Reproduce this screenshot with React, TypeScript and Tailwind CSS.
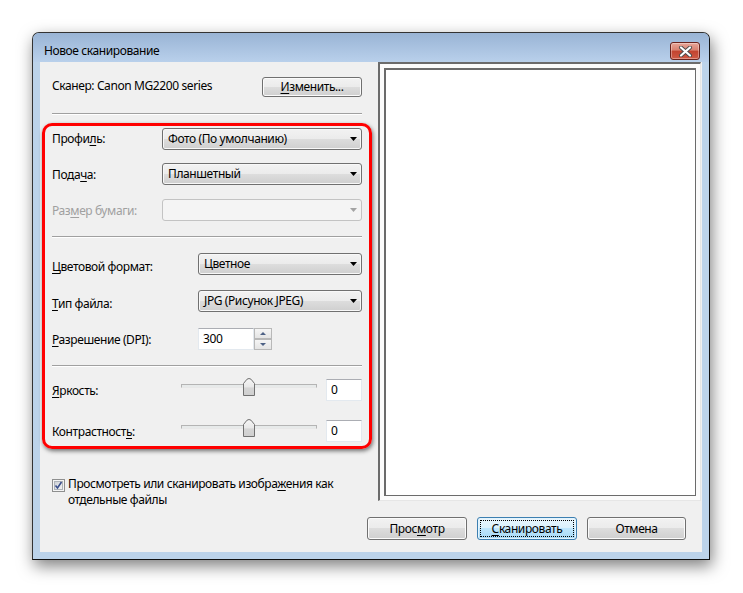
import type { ReactNode } from "react";

const btn =
  "flex items-center justify-center rounded-[3px] border border-[#707070] bg-[linear-gradient(to_bottom,#f2f2f2_0%,#ebebeb_50%,#dddddd_50%,#cfcfcf_100%)] shadow-[inset_0_0_0_1px_#fbfbfb] text-black";

function U({ children }: { children: ReactNode }) {
  return <span className="underline underline-offset-2">{children}</span>;
}

function Arrow({ disabled }: { disabled?: boolean }) {
  return (
    <svg width="7" height="4" viewBox="0 0 7 4" className="shrink-0">
      <path d="M0 0h7L3.5 4z" fill={disabled ? "#a3a3a3" : "#000"} />
    </svg>
  );
}

function Combo({ value, width, disabled }: { value?: string; width: string; disabled?: boolean }) {
  return (
    <div
      className={
        disabled
          ? `${width} flex h-[22px] items-center justify-between rounded-[3px] border border-[#c3c3c3] bg-[#f4f4f4] pl-[5px] pr-[4px]`
          : `${width} flex h-[22px] items-center justify-between rounded-[3px] border border-[#707070] bg-[linear-gradient(to_bottom,#f2f2f2_0%,#ebebeb_50%,#dddddd_50%,#cfcfcf_100%)] pl-[5px] pr-[4px] shadow-[inset_0_0_0_1px_#f8f8f8]`
      }
    >
      <span className="leading-none">{value}</span>
      <Arrow disabled={disabled} />
    </div>
  );
}

function Edit({ value, width }: { value: string; width: string }) {
  return (
    <div
      className={`${width} flex h-[22px] items-center border border-[#e3e9ef] border-t-[#abadb3] bg-white pl-[4px]`}
    >
      {value}
    </div>
  );
}

function Slider() {
  return (
    <div className="relative h-[22px] w-[136px]">
      <div className="absolute left-0 right-0 top-[5px] h-[4px] border border-[#b4b4b4] border-b-[#e8e8e8] bg-[#e7eaea]" />
      <svg
        width="12"
        height="18"
        viewBox="0 0 12 18"
        className="absolute left-[62px] top-[-1px]"
      >
        <defs>
          <linearGradient id="thumb" x1="0" y1="0" x2="0" y2="1">
            <stop offset="0" stopColor="#f6f6f6" />
            <stop offset="0.5" stopColor="#e8e8e8" />
            <stop offset="0.55" stopColor="#d5d5d5" />
            <stop offset="1" stopColor="#cfcfcf" />
          </linearGradient>
        </defs>
        <path
          d="M0.5 17.5V5.5L4 1.2Q6 -0.2 8 1.2L11.5 5.5V17.5Z"
          fill="url(#thumb)"
          stroke="#707070"
        />
      </svg>
    </div>
  );
}

function Spin() {
  return (
    <div className="flex">
      <Edit value="300" width="w-[56px]" />
      <div className="flex w-[18px] flex-col">
        {["M1 4h6L4 1z", "M1 1h6L4 4z"].map((d) => (
          <div
            key={d}
            className="flex h-[11px] items-center justify-center border border-[#b8b8b8] bg-[linear-gradient(to_bottom,#f5f5f5,#e4e4e4)]"
          >
            <svg width="8" height="5" viewBox="0 0 8 5">
              <path d={d} fill="#4d6185" />
            </svg>
          </div>
        ))}
      </div>
    </div>
  );
}

function Sep() {
  return <div className="h-[2px] border-t border-[#a0a0a0] border-b border-b-white" />;
}

export default function App() {
  return (
    <div
      className="h-[593px] w-[743px] overflow-hidden bg-white pl-[32px] pt-[32px] text-[12px] tracking-[-0.4px] text-black"
      style={{ fontFamily: '"Noto Sans", "Segoe UI", sans-serif' }}
    >
      <div className="flex h-[528px] w-[678px] flex-col rounded-t-[7px] border border-[#333] border-b-[#111] border-r-[#111] bg-[#bcd3ea] shadow-[2px_6px_16px_rgba(0,0,0,0.5)]">
        {/* title bar */}
        <div className="flex h-[29px] items-start justify-between rounded-t-[6px] bg-[linear-gradient(to_bottom,#99b4d5,#b9d0eb)] pl-[11px] pr-[9px]">
          <span className="mt-[12px] leading-none">Новое сканирование</span>
          <div className="mt-[9px] flex h-[18px] w-[30px] items-center justify-center rounded-[3px] border border-[#6a231d] bg-[linear-gradient(to_bottom,#e8a699_0%,#d8806f_45%,#c2432f_50%,#cf5a45_100%)] shadow-[inset_0_0_0_1px_rgba(255,255,255,0.35)]">
            <svg width="15" height="11" viewBox="0 0 15 11">
              <path
                d="M3 1.5l9 8M12 1.5l-9 8"
                stroke="#4b4b4b"
                strokeWidth="4"
                strokeLinecap="round"
              />
              <path
                d="M3 1.5l9 8M12 1.5l-9 8"
                stroke="#fff"
                strokeWidth="2.2"
                strokeLinecap="round"
              />
            </svg>
          </div>
        </div>

        {/* client */}
        <div className="flex flex-1 px-[7px] pb-[7px]">
          <div className="flex flex-1 flex-col bg-[#f0f0f0]">
            <div className="flex h-[439px]">
              {/* left side */}
              <div className="flex w-[338px] flex-col pl-[12px] pr-[16px]">
                <div className="mt-[15px] flex h-[20px] items-center justify-between">
                  <span className="-mt-[3px]">Сканер: Canon MG2200 series</span>
                  <div className={`${btn} h-[20px] w-[100px]`}>
                    <span>
                      <U>И</U>зменить...
                    </span>
                  </div>
                </div>
                <div className="mt-[16px]">
                  <Sep />
                </div>

                <div className="-mx-[10px] mt-[8px] rounded-[10px] border-[3px] border-[#ff0000] px-[7px] pb-[4px] pt-[2px] shadow-[1px_2px_4px_rgba(0,0,0,0.55)]">
                  <div className="flex items-start">
                    <span className="mt-[2px] w-[110px]">
                      Профи<U>л</U>ь:
                    </span>
                    <Combo value="Фото (По умолчанию)" width="w-[200px]" />
                  </div>
                  <div className="mt-[13px] flex items-start">
                    <span className="mt-[3px] w-[110px]">
                      Пода<U>ч</U>а:
                    </span>
                    <Combo value="Планшетный" width="w-[200px]" />
                  </div>
                  <div className="mt-[14px] flex items-start">
                    <span className="mt-[3px] w-[110px] text-[#a0a0a0]">
                      Раз<U>м</U>ер бумаги:
                    </span>
                    <Combo width="w-[200px]" disabled />
                  </div>

                  <div className="mt-[15px]">
                    <Sep />
                  </div>

                  <div className="mt-[15px] flex items-start">
                    <span className="mt-[5px] w-[146px]">
                      <U>Ц</U>ветовой формат:
                    </span>
                    <Combo value="Цветное" width="w-[164px]" />
                  </div>
                  <div className="mt-[14px] flex items-start">
                    <span className="mt-[5px] w-[146px]">
                      <U>Т</U>ип файла:
                    </span>
                    <Combo value="JPG (Рисунок JPEG)" width="w-[164px]" />
                  </div>
                  <div className="mt-[15px] flex items-start">
                    <span className="mt-[3px] w-[146px]">
                      <U>Р</U>азрешение (DPI):
                    </span>
                    <Spin />
                  </div>

                  <div className="mt-[15px]">
                    <Sep />
                  </div>

                  <div className="mt-[12px] flex items-start">
                    <span className="mt-[3px] w-[129px]">
                      <U>Я</U>ркость:
                    </span>
                    <Slider />
                    <div className="ml-[9px]">
                      <Edit value="0" width="w-[36px]" />
                    </div>
                  </div>
                  <div className="mt-[19px] flex items-start">
                    <span className="mt-[3px] w-[129px]">
                      Контрастност<U>ь</U>:
                    </span>
                    <Slider />
                    <div className="ml-[9px]">
                      <Edit value="0" width="w-[36px]" />
                    </div>
                  </div>
                </div>

                <div className="mt-[27px] flex items-start gap-[3px]">
                  <svg width="13" height="13" viewBox="0 0 13 13" className="mt-[3px] shrink-0">
                    <defs>
                      <linearGradient id="cb" x1="0" y1="0" x2="1" y2="1">
                        <stop offset="0" stopColor="#cbcfd5" />
                        <stop offset="1" stopColor="#f6f6f6" />
                      </linearGradient>
                    </defs>
                    <rect x="0.5" y="0.5" width="12" height="12" fill="#f4f4f4" stroke="#8e8f8f" />
                    <rect x="2.5" y="2.5" width="8" height="8" fill="url(#cb)" stroke="#aeb3b9" />
                    <path d="M3.5 6.5l2 2.5 4-6" stroke="#3a4f8c" strokeWidth="1.6" fill="none" />
                  </svg>
                  <span className="leading-[16px]">
                    Просмотреть или сканировать изобра<U>ж</U>ения как
                    <br />
                    отдельные файлы
                  </span>
                </div>
              </div>

              {/* preview */}
              <div className="mr-[1px] flex flex-1 border-b border-l-2 border-r border-t-2 border-[#6b6b6b] border-b-[#e6e6e6] border-r-[#e6e6e6] bg-[#fbfbfb] p-[4px]">
                <div className="flex-1 border-b border-l-2 border-r border-t-2 border-[#6b6b6b] bg-white" />
              </div>
            </div>

            <div className="mt-[16px] flex justify-end gap-[10px] pr-[16px]">
              <div className={`${btn} h-[23px] w-[100px]`}>
                <span>
                  Прос<U>м</U>отр
                </span>
              </div>
              <div className="flex h-[23px] w-[100px] items-center justify-center rounded-[3px] border border-[#3c7fb1] bg-[linear-gradient(to_bottom,#eaf6fd_0%,#d9f0fc_50%,#bee6fd_50%,#a7d9f5_100%)] p-[2px] shadow-[inset_0_0_0_1px_#e4f4fd]">
                <div className="flex h-full w-full items-center justify-center border border-dotted border-black">
                  <span>
                    <U>С</U>канировать
                  </span>
                </div>
              </div>
              <div className={`${btn} h-[23px] w-[99px]`}>Отмена</div>
            </div>
          </div>
        </div>
      </div>
    </div>
  );
}
